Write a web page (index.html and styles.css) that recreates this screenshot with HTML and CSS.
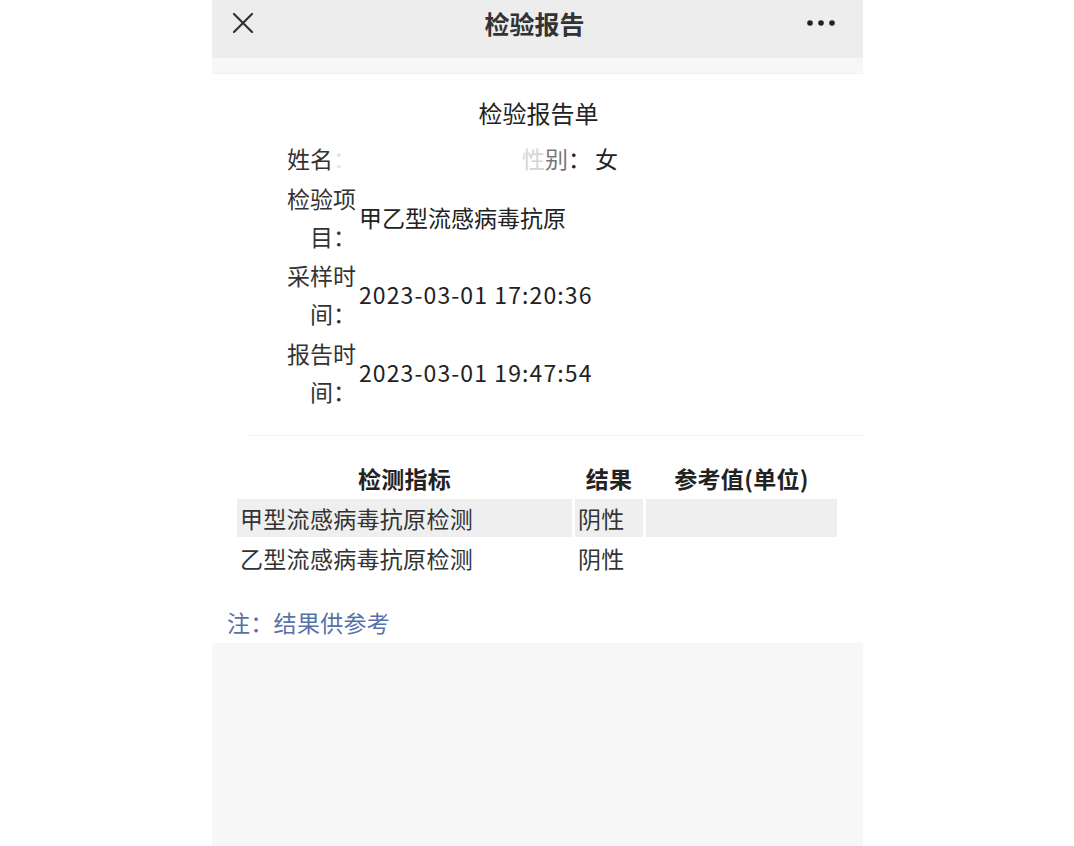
FILE: index.html
```html
<!DOCTYPE html>
<html lang="zh-CN">
<head>
<meta charset="utf-8">
<title>检验报告</title>
<link rel="stylesheet" href="styles.css">
</head>
<body>
<div class="phone">
  <header class="topbar">
    <svg class="icon-close" width="22" height="22" viewBox="0 0 22 22"><path d="M2 2 L20 20 M20 2 L2 20" stroke="#333" stroke-width="2.2" fill="none" stroke-linecap="round"/></svg>
    <div class="topbar-title">检验报告</div>
    <svg class="icon-more" width="30" height="8" viewBox="0 0 30 8"><circle cx="4" cy="4" r="2.8" fill="#222"/><circle cx="15" cy="4" r="2.8" fill="#222"/><circle cx="26" cy="4" r="2.8" fill="#222"/></svg>
  </header>
  <div class="strip"></div>
  <main class="report">
    <h1 class="report-title">检验报告单</h1>
    <div class="info">
      <div class="info-row">
        <div class="label">姓名<span class="fade">：</span></div>
        <div class="value name-value"></div>
        <div class="gender"><span class="fade2">性</span><span class="fade3">别</span>：<span class="gender-val">女</span></div>
      </div>
      <div class="info-row">
        <div class="label">检验项<br>目：</div>
        <div class="value">甲乙型流感病毒抗原</div>
      </div>
      <div class="info-row">
        <div class="label">采样时<br>间：</div>
        <div class="value date">2023-03-01 17:20:36</div>
      </div>
      <div class="info-row">
        <div class="label">报告时<br>间：</div>
        <div class="value date">2023-03-01 19:47:54</div>
      </div>
    </div>
    <div class="divider"></div>
    <table class="results">
      <thead>
        <tr><th class="c1">检测指标</th><th class="c2">结果</th><th class="c3">参考值(单位)</th></tr>
      </thead>
      <tbody>
        <tr class="odd"><td>甲型流感病毒抗原检测</td><td>阴性</td><td></td></tr>
        <tr><td>乙型流感病毒抗原检测</td><td>阴性</td><td></td></tr>
      </tbody>
    </table>
    <p class="note">注：结果供参考</p>
  </main>
  <div class="bottom"></div>
</div>
</body>
</html>
```
FILE: styles.css
```css
html, body {
  margin: 0;
  padding: 0;
  background: #ffffff;
}
body {
  font-family: "Noto Sans CJK SC", "Noto Sans", sans-serif;
  color: #2a2a2a;
}
.phone {
  width: 651px;
  margin: 0 auto;
  padding-left: 1px;
}
.topbar {
  height: 58px;
  background: #ededed;
  display: flex;
  align-items: center;
  justify-content: space-between;
  padding: 0 27px 0 20px;
  box-sizing: border-box;
  position: relative;
}
.icon-close {
  display: block;
  margin-top: -12px;
}
.icon-more {
  display: block;
  margin-top: -12px;
}
.topbar-title {
  position: absolute;
  left: 0;
  right: 6px;
  top: 0;
  text-align: center;
  font-size: 25px;
  font-weight: 700;
  line-height: 46px;
  color: #333;
  pointer-events: none;
}
.strip {
  height: 15px;
  background: #f7f7f7;
  border-bottom: 1px solid #f1f1f1;
}
.report {
  display: flex;
  flex-direction: column;
}
.report-title {
  margin: 20px 0 0 0;
  font-size: 24px;
  font-weight: 400;
  line-height: 38px;
  text-align: center;
  padding-left: 2px;
  color: #222;
}
.info {
  margin: 7px 0 0 74px;
  display: flex;
  flex-direction: column;
  gap: 1.5px;
}
.info-row {
  display: flex;
  align-items: center;
  font-size: 23px;
  line-height: 38px;
}
.label {
  width: 70px;
  text-align: right;
  color: #333;
}
.value {
  margin-left: 3px;
  color: #222;
}
.date {
  letter-spacing: 1.1px;
}
.name-value {
  width: 163px;
}
.gender {
  color: #222;
}
.gender-val {
  margin-left: 4px;
}
.fade { color: #e4e4e4; }
.fade2 { color: #d6d6d6; }
.fade3 { color: #777; }
.divider {
  margin: 25px 0 0 36px;
  height: 1px;
  background: #f3f3f3;
}
.results {
  margin: 21px 0 0 22px;
  width: 606px;
  border-collapse: separate;
  border-spacing: 3px 2px;
  font-size: 23px;
  letter-spacing: 0.3px;
}
.results th {
  font-weight: 700;
  line-height: 38px;
  text-align: center;
  color: #222;
  padding: 0;
}
.results td {
  line-height: 38px;
  padding: 0 0 0 3px;
  color: #333;
}
.c1 { width: 335px; }
.c2 { width: 68px; }
.results tr.odd td {
  background: #efefef;
}
.note {
  margin: 24px 0 2px 15px;
  font-size: 23px;
  letter-spacing: 0.3px;
  line-height: 38px;
  color: #5771a9;
}
.bottom {
  margin-top: 0;
  height: 210px;
  background: #f7f7f7;
}
```
